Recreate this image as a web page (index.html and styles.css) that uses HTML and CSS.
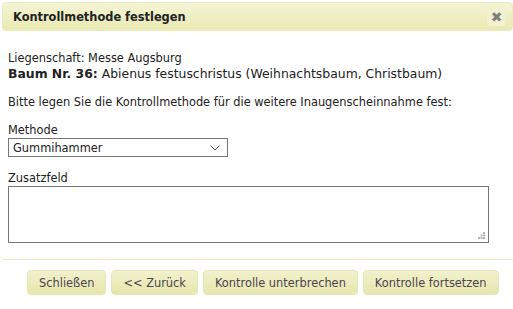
FILE: index.html
```html
<!DOCTYPE html>
<html lang="de">
<head>
    <meta charset="UTF-8">
    <title>Kontrollmethode festlegen</title>
    <link rel="stylesheet" href="styles.css">
</head>
<body>
    <div class="dialog">
        <div class="titlebar">
            <span class="title">Kontrollmethode festlegen</span>
            <a class="close" title="Schließen">&#x2716;</a>
        </div>
        <div class="content">
            <div class="info">Liegenschaft: Messe Augsburg</div>
            <div class="tree"><b>Baum Nr. 36:</b> Abienus festuschristus (Weihnachtsbaum, Christbaum)</div>
            <p class="hint">Bitte legen Sie die Kontrollmethode für die weitere Inaugenscheinnahme fest:</p>
            <label class="label" for="methode">Methode</label>
            <select id="methode" class="select">
                <option>Gummihammer</option>
                <option>Sichtkontrolle</option>
            </select>
            <label class="label label-extra" for="zusatz">Zusatzfeld</label>
            <textarea id="zusatz" class="textarea"></textarea>
        </div>
        <div class="buttons">
            <button type="button">Schließen</button>
            <button type="button">&lt;&lt; Zurück</button>
            <button type="button">Kontrolle unterbrechen</button>
            <button type="button">Kontrolle fortsetzen</button>
        </div>
    </div>
</body>
</html>
```

FILE: styles.css
```css
body { margin: 0; background: #fff; font-family: "DejaVu Sans", Verdana, sans-serif; font-size: 11.4px; color: #222; }
.dialog { padding: 2px 0 0 2px; }
.titlebar { display: flex; align-items: center; justify-content: space-between; height: 27px; padding: 0 6px 0 10px;
    border: 1px solid #ebebbf; border-radius: 4px; background: linear-gradient(#f4f4d6, #e9e9b3); }
.title { font-weight: bold; font-size: 11.4px; color: #222; }
.close { display: flex; align-items: center; justify-content: center; width: 19px; height: 19px; border-radius: 3px;
    background: #f1f1d0; color: #7d7d7d; font-size: 14px; line-height: 1; }
.content { padding: 21px 8px 0 6px; }
.info { line-height: 13px; }
.tree { font-size: 12.4px; line-height: 17px; }
.hint { margin: 13px 0 14px; line-height: 14px; }
.label { display: block; line-height: 15px; }
.label-extra { margin-top: 14px; }
.select { display: block; width: 220px; height: 19px; padding: 0 4px; font: inherit; color: #222;
    border: 1px solid #767676; border-radius: 0; appearance: none;
    background: #fff url("data:image/svg+xml,%3Csvg xmlns='http://www.w3.org/2000/svg' width='10' height='6'%3E%3Cpath d='M.5.5 5 5 9.5.5' fill='none' stroke='%23555'/%3E%3C/svg%3E") no-repeat right 7px center; }
.textarea { display: block; width: 481px; height: 57px; box-sizing: border-box; border: 1px solid #767676; font: inherit; resize: none;
    background: #fff url("data:image/svg+xml,%3Csvg xmlns='http://www.w3.org/2000/svg' width='7' height='7' fill='%23b5b5b5'%3E%3Crect x='5' y='0' width='2' height='2'/%3E%3Crect x='5' y='5' width='2' height='2'/%3E%3Crect x='2.5' y='2.5' width='2' height='2'/%3E%3Crect x='5' y='2.5' width='2' height='2'/%3E%3Crect x='0' y='5' width='2' height='2'/%3E%3Crect x='2.5' y='5' width='2' height='2'/%3E%3C/svg%3E") no-repeat right 3px bottom 3px; }
.buttons { display: flex; gap: 5px; margin-top: 16px; padding: 10px 0 0 25px; border-top: 1px solid #ecebbb; }
button { height: 25px; padding: 0 11px; font: inherit; color: #4d4552; border: 1px solid #e6e6b8; border-radius: 4px;
    background: linear-gradient(#f1f1cd, #e6e6ad); }
```
